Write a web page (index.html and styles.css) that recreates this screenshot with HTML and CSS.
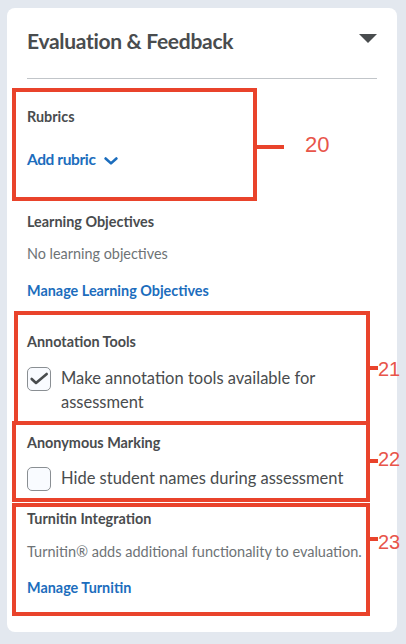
FILE: index.html
```html
<!DOCTYPE html>
<html lang="en">
<head>
<meta charset="UTF-8">
<meta name="viewport" content="width=device-width, initial-scale=1.0">
<title>Evaluation &amp; Feedback</title>
<link rel="stylesheet" href="styles.css">
</head>
<body>
  <div class="page">
    <section class="card">
      <header class="card-head">
        <h2 class="card-title">Evaluation &amp; Feedback</h2>
        <svg class="caret" width="18" height="9" viewBox="0 0 18 9"><path d="M0 0H18L9 9Z" fill="#494c4e"/></svg>
      </header>
      <div class="divider"></div>

      <h3 class="label label-rubrics">Rubrics</h3>
      <a class="add-link" href="#">Add rubric <svg class="chevron" width="14" height="8" viewBox="0 0 14 8"><path d="M1.6 1.5L7 6.4L12.4 1.5" fill="none" stroke="#1c6dbd" stroke-width="2.6" stroke-linecap="round" stroke-linejoin="round"/></svg></a>

      <h3 class="label label-lo">Learning Objectives</h3>
      <p class="muted">No learning objectives</p>
      <a class="link link-lo" href="#">Manage Learning Objectives</a>

      <h3 class="label label-annot">Annotation Tools</h3>
      <label class="check-row check-annot">
        <span class="checkbox">
          <svg width="22" height="22" viewBox="0 0 22 22"><path d="M3.7 11L8 15L18.7 6" fill="none" stroke="#494c4e" stroke-width="2.6" stroke-linecap="round" stroke-linejoin="round"/></svg>
        </span>
        <span class="check-text">Make annotation tools available for assessment</span>
      </label>

      <h3 class="label label-anon">Anonymous Marking</h3>
      <label class="check-row check-anon">
        <span class="checkbox"></span>
        <span class="check-text">Hide student names during assessment</span>
      </label>

      <h3 class="label label-turn">Turnitin Integration</h3>
      <p class="muted muted-turn">Turnitin® adds additional functionality to evaluation.</p>
      <a class="link link-turn" href="#">Manage Turnitin</a>
    </section>

    <!-- callouts -->
    <div class="box box-20"></div>
    <div class="tick tick-20"></div>
    <div class="num num-20">20</div>

    <div class="box box-21"></div>
    <div class="tick tick-21"></div>
    <div class="num num-21">21</div>

    <div class="box box-22"></div>
    <div class="tick tick-22"></div>
    <div class="num num-22">22</div>

    <div class="box box-23"></div>
    <div class="tick tick-23"></div>
    <div class="num num-23">23</div>
  </div>
</body>
</html>
```

FILE: styles.css
```css
body {
  margin: 0;
  padding: 0;
  background: #e3e8ef;
  font-family: "Lato", "Noto Sans", sans-serif;
}

.page {
  position: relative;
  padding: 8px 9px 12px 7px;
}

.card {
  background: #ffffff;
  border-radius: 8px;
  padding: 19px 20px 34px 20px;
}

.card-head {
  display: flex;
  justify-content: space-between;
  align-items: flex-start;
  height: 28px;
}

.card-title {
  margin: 0;
  font-size: 21px;
  line-height: 28px;
  font-weight: 700;
  letter-spacing: -0.3px;
  color: #494c4e;
}

.caret {
  margin-top: 7px;
}

.divider {
  margin-top: 23px;
  border-top: 1px solid #c1c5c9;
}

.label {
  margin: 0;
  font-size: 14.4px;
  line-height: 20px;
  font-weight: 700;
  color: #494c4e;
}

.label-rubrics { margin-top: 28px; }
.label-lo { margin-top: 41px; }
.label-annot { margin-top: 31px; }
.label-anon { margin-top: 19px; }
.label-turn { margin-top: 18px; }

.add-link {
  display: block;
  margin-top: 20px;
  font-size: 15.5px;
  line-height: 24px;
  font-weight: 700;
  letter-spacing: -0.4px;
  color: #1c6dbd;
  text-decoration: none;
}

.chevron {
  margin-left: 5px;
}

.muted {
  margin: 12px 0 0;
  font-size: 14.4px;
  line-height: 20px;
  color: #6e7376;
}

.muted-turn {
  margin-top: 13px;
  font-size: 14.5px;
}

.link {
  display: block;
  margin-top: 17px;
  font-size: 14.4px;
  line-height: 20px;
  font-weight: 700;
  color: #1c6dbd;
  text-decoration: none;
}

.link-turn { margin-top: 16px; }

.check-row {
  display: flex;
  align-items: flex-start;
  gap: 10px;
  margin-top: 14px;
}

.check-anon { margin-top: 13px; }

.checkbox {
  flex: none;
  width: 24px;
  height: 24px;
  margin-top: 1px;
  box-sizing: border-box;
  border: 1px solid #8a8f93;
  border-radius: 5px;
  background: #f9fbff;
}

.checkbox svg {
  display: block;
}

.check-text {
  font-size: 16.5px;
  line-height: 24px;
  color: #494c4e;
}

/* red annotation callouts */
.box {
  position: absolute;
  box-sizing: border-box;
  border: 4px solid #e9432b;
}

.box-20 { left: 12px; top: 88px; width: 245px; height: 113px; }
.box-21 { left: 14px; top: 311px; width: 356px; height: 114px; }
.box-22 { left: 12px; top: 421px; width: 358px; height: 81px; }
.box-23 { left: 12px; top: 503px; width: 358px; height: 113px; }

.tick {
  position: absolute;
  height: 4px;
  background: #e9432b;
}

.tick-20 { left: 257px; top: 145px; width: 27px; }
.tick-21 { left: 366px; top: 366px; width: 12px; }
.tick-22 { left: 370px; top: 459px; width: 8px; }
.tick-23 { left: 370px; top: 537px; width: 8px; }

.num {
  position: absolute;
  font-family: "Liberation Sans", Arial, sans-serif;
  font-size: 20px;
  line-height: 20px;
  color: #e8554a;
}

.num-20 { left: 305px; top: 134px; font-size: 22px; line-height: 22px; }
.num-21 { left: 378px; top: 359px; }
.num-22 { left: 378px; top: 449px; }
.num-23 { left: 378px; top: 532px; }
```
